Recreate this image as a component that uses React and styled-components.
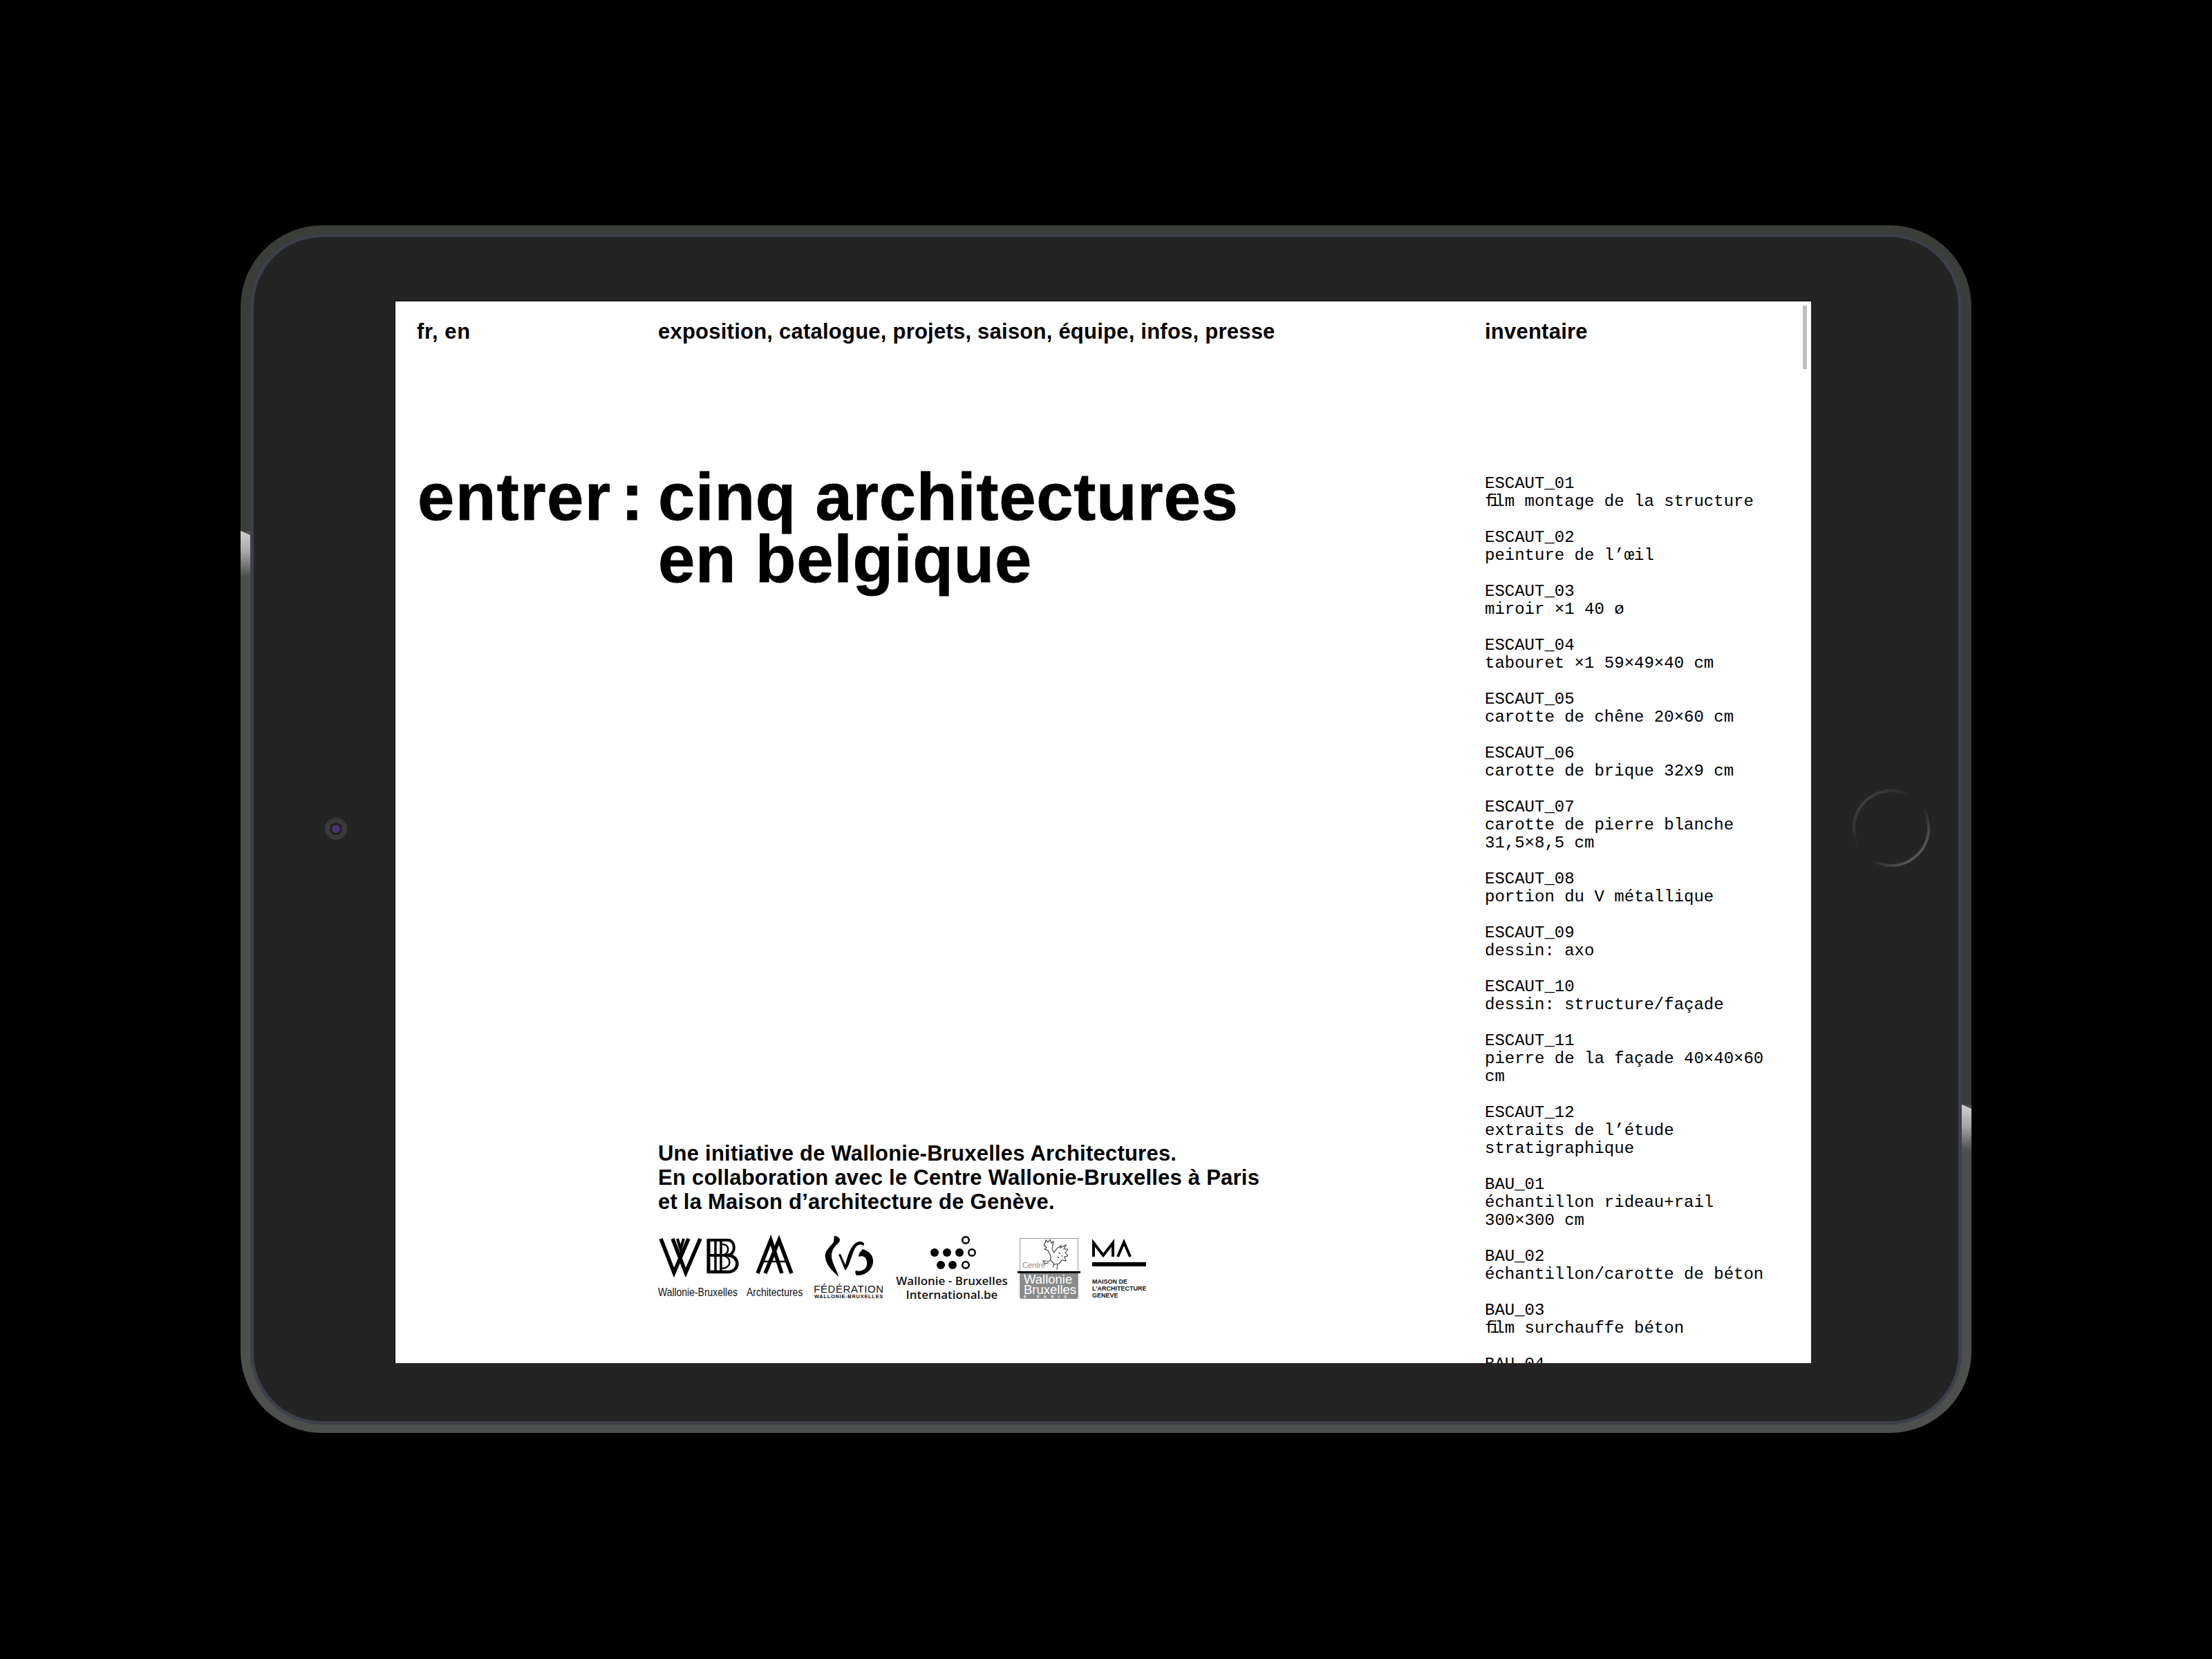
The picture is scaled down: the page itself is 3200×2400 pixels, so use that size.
import React from 'react';
import styled, { createGlobalStyle } from 'styled-components';

const GlobalStyle = createGlobalStyle`
  html, body {
    margin: 0;
    padding: 0;
    background: #000;
  }
`;

const Page = styled.div`
  width: 3200px;
  height: 2400px;
  padding: 326px 0 0 348px;
  box-sizing: border-box;
  background: #000;
  overflow: hidden;
`;

const Bezel = styled.div`
  position: relative;
  display: flex;
  width: 2504px;
  height: 1747px;
  padding: 13px 14px 12px;
  box-sizing: border-box;
  border-radius: 118px;
  background:
    linear-gradient(#3a3d38 442px, #4d4f4c 442px) left / 50% 100% no-repeat,
    linear-gradient(#3a3d38 1272px, #4d4f4c 1272px) right / 50% 100% no-repeat;
`;

const Glint = styled.div`
  position: absolute;
  top: ${p => p.$top}px;
  ${p => p.$side}: 0;
  width: 14px;
  height: 66px;
  background: linear-gradient(#d0d0d0 0%, #a8a8a8 45%, #4d4f4c 100%);
  clip-path: polygon(0 0, 100% 6px, 100% 100%, 0 100%);
`;

const Face = styled.div`
  position: relative;
  flex: 1;
  display: flex;
  padding: 92px 213px 84px 204px;
  box-sizing: border-box;
  border-radius: 104px;
  background: #242424;
  border-style: solid;
  border-color: #3d404b;
  border-width: 4px 5px 5px;
`;

const Camera = styled.div`
  position: absolute;
  left: 103px;
  top: 840px;
  width: 32px;
  height: 32px;
  border-radius: 50%;
  background: #3a3a3a;
  display: flex;
  align-items: center;
  justify-content: center;

  &::after {
    content: '';
    width: 12px;
    height: 12px;
    border-radius: 50%;
    background: #47356e;
    border: 3px solid #1f1e24;
  }
`;

const HomeRing = styled.svg`
  position: absolute;
  left: 2309px;
  top: 795px;
  width: 120px;
  height: 120px;
`;

const Screen = styled.div`
  position: relative;
  flex: 1;
  background: #fff;
  overflow: hidden;
  display: grid;
  grid-template-columns: 380px 1196px 1fr;
  grid-template-rows: 238px minmax(0, 1fr);
  border-top: 1px solid #000;
  border-left: 1px solid #000;
  color: #000;
  font-family: 'Liberation Sans', Arial, sans-serif;
  font-weight: 700;
`;

const Scrollbar = styled.div`
  position: absolute;
  top: 6px;
  right: 6px;
  width: 6px;
  height: 92px;
  background: #bfbfbf;
`;

const NavText = styled.div`
  font-size: 31px;
  line-height: 36px;
  padding: 26px 0 0 ${p => p.$pad || 0}px;
  letter-spacing: ${p => p.$ls || 0.23}px;
`;

const Title = styled.h1`
  margin: 0;
  font-size: 96px;
  line-height: 90px;
  font-weight: 700;
  letter-spacing: ${p => p.$ls || 0.7}px;
  word-spacing: ${p => p.$words || 0}px;
  padding-left: ${p => p.$pad || 0}px;
  -webkit-text-stroke: 0.8px #000;
`;

const Middle = styled.div`
  display: flex;
  flex-direction: column;
  min-height: 0;
`;

const Initiative = styled.p`
  margin: auto 0 0;
  font-size: 31px;
  line-height: 35px;
  letter-spacing: 0.23px;
`;

const LogoRow = styled.div`
  display: flex;
  align-items: flex-start;
  margin: 32px 0 92px;
  height: 92px;
  flex-shrink: 0;
  font-weight: 400;
`;

const Logo = styled.div`
  width: ${p => p.$w}px;
  margin-left: ${p => p.$gap || 0}px;
  margin-top: ${p => p.$top || 0}px;
  flex-shrink: 0;
  display: flex;
  flex-direction: column;
  align-items: ${p => (p.$center ? 'center' : 'flex-start')};
  position: relative;
`;

const MarkPair = styled.div`
  display: flex;
  gap: 22px;
  padding-left: 1px;
`;

const Mark = styled.svg`
  display: block;
  overflow: visible;
  flex-shrink: 0;
`;

const Caption = styled.div`
  font-size: ${p => p.$size}px;
  line-height: ${p => p.$lh || p.$size}px;
  font-family: ${p => p.$font || "'Liberation Sans', Arial, sans-serif"};
  font-weight: ${p => p.$weight || 400};
  letter-spacing: ${p => p.$ls || 0}px;
  margin-top: ${p => p.$mt || 0}px;
  white-space: nowrap;
  color: ${p => p.$color || '#111'};
`;

const CaptionRow = styled.div`
  display: flex;
  gap: 11px;
  margin-top: 19px;
`;

const Squeezed = styled(Caption)`
  transform: scaleX(0.82);
  transform-origin: left center;
  width: ${p => p.$w}px;
`;

const CentreBox = styled.div`
  width: 85px;
  height: 86px;
  box-sizing: border-box;
  border: 1px solid #9a9a9a;
  display: flex;
  flex-direction: column;
`;

const CentreTop = styled.div`
  height: 48px;
  flex-shrink: 0;
  padding: 33px 0 0 3px;
  box-sizing: border-box;
  position: relative;
`;

const Rooster = styled.svg`
  position: absolute;
  left: 32px;
  top: 1px;
  width: 37px;
  height: 44px;
`;

const CentreGrey = styled.div`
  flex: 1;
  background: #8b8b8b;
  padding-left: 5px;
`;

const CentreRule = styled.div`
  position: absolute;
  left: -3px;
  top: 48px;
  width: 91px;
  height: 3px;
  background: #000;
`;

const Inventory = styled.div`
  padding-top: 13px;
  font-family: 'Liberation Mono', 'Courier New', monospace;
  font-weight: 400;
  font-size: 24px;
  line-height: 26px;
  min-height: 0;
`;

const Item = styled.div`
  margin-bottom: 26px;
`;

const FiPair = styled.span`
  letter-spacing: -7.2px;
`;

const items = [
  ['ESCAUT_01', 'film montage de la structure'],
  ['ESCAUT_02', 'peinture de l’œil'],
  ['ESCAUT_03', 'miroir ×1 40 ø'],
  ['ESCAUT_04', 'tabouret ×1 59×49×40 cm'],
  ['ESCAUT_05', 'carotte de chêne 20×60 cm'],
  ['ESCAUT_06', 'carotte de brique 32x9 cm'],
  ['ESCAUT_07', 'carotte de pierre blanche', '31,5×8,5 cm'],
  ['ESCAUT_08', 'portion du V métallique'],
  ['ESCAUT_09', 'dessin: axo'],
  ['ESCAUT_10', 'dessin: structure/façade'],
  ['ESCAUT_11', 'pierre de la façade 40×40×60', 'cm'],
  ['ESCAUT_12', 'extraits de l’étude', 'stratigraphique'],
  ['BAU_01', 'échantillon rideau+rail', '300×300 cm'],
  ['BAU_02', 'échantillon/carotte de béton'],
  ['BAU_03', 'film surchauffe béton'],
  ['BAU_04'],
];

function renderLine(line) {
  // the source font sets "fi" as a ligature, one cell wide
  if (line.startsWith('fi')) {
    return (
      <>
        <FiPair>fi</FiPair>
        {line.slice(2)}
      </>
    );
  }
  return line;
}

function WbMark() {
  return (
    <Mark width="118" height="50" viewBox="0 0 118 50" fill="none" stroke="#000">
      <g strokeWidth="5.5">
        <path d="M3 0 L22 49 L43 0" />
        <path d="M20 0 L39 49 L60 0" />
        <path d="M27 0 L31.5 15 L36 0" strokeWidth="4" />
      </g>
      <path d="M72 0 V50" strokeWidth="5" />
      <path d="M82 2 V48 M90 2 V48" strokeWidth="3.5" />
      <path d="M70 2 H100 C112 2 112 24 99 24 H72" strokeWidth="4" />
      <path d="M99 24 C118 24 118 48 100 48 H70" strokeWidth="4.5" />
      <path d="M92 8 C103 8 103 22 92 24 C106 26 106 42 92 43" strokeWidth="2.5" />
    </Mark>
  );
}

function AaMark() {
  return (
    <Mark width="56" height="50" viewBox="0 0 56 50" fill="none" stroke="#000" strokeWidth="5.5">
      <path d="M3 50 L22 2 L38 50" />
      <path d="M14 50 L34 2 L52 50" />
      <path d="M8 33 H44" strokeWidth="2.5" />
    </Mark>
  );
}

function FwbMark() {
  return (
    <Mark width="72" height="60" viewBox="0 0 72 60" fill="#000">
      <path d="M15 0 C24 1 25 7 20 11 C13 17 9 25 12 35 C14 43 19 50 21 59 C14 52 4 44 2 32 C0 20 12 14 14 8 C15 5 14 3 15 0 Z" />
      <path d="M21 27 L24 26 L31 42 C34 30 38 14 48 9 C54 6 61 11 57 14 C51 10 46 14 43 22 C39 32 36 44 31 50 C28 44 25 35 21 27 Z" />
      <path d="M56 19 C66 22 72 29 71 38 C70 50 58 58 47 57 C45 54 45 52 46 50 C56 53 64 46 62 37 C61 30 56 28 50 30 C50 26 53 22 56 19 Z" />
    </Mark>
  );
}

function DotsMark() {
  return (
    <Mark width="76" height="48" viewBox="0 0 76 48" stroke="#000">
      <g fill="#000" stroke="none">
        <circle cx="13" cy="24" r="6" />
        <circle cx="31" cy="24" r="6" />
        <circle cx="49" cy="24" r="6" />
        <circle cx="22" cy="42" r="6" />
        <circle cx="39" cy="42" r="6" />
      </g>
      <g fill="none" strokeWidth="2.5">
        <circle cx="67" cy="24" r="4.8" />
        <circle cx="58" cy="42" r="4.8" />
        <circle cx="58" cy="6" r="4.8" />
      </g>
    </Mark>
  );
}

function MaMark() {
  return (
    <Mark width="78" height="37" viewBox="0 0 78 37" fill="none" stroke="#000">
      <path d="M2 23 V3 L16 21 L30 3 V23" strokeWidth="4" />
      <path d="M37 23 L46 2 L55 23" strokeWidth="4" />
      <path d="M0 34 H78" strokeWidth="6" />
    </Mark>
  );
}

const App = () => {
  return (
    <>
      <GlobalStyle />
      <Page>
        <Bezel>
          <Glint $side="left" $top={442} />
          <Glint $side="right" $top={1272} />
          <Face>
            <Camera />
            <HomeRing viewBox="0 0 120 120" fill="none">
              <defs>
                <linearGradient id="ring" x1="0" y1="0" x2="1" y2="1">
                  <stop offset="0" stopColor="#4a4a4a" />
                  <stop offset="0.42" stopColor="#242424" />
                  <stop offset="0.58" stopColor="#242424" />
                  <stop offset="1" stopColor="#707070" />
                </linearGradient>
              </defs>
              <circle cx="60" cy="60" r="54" stroke="url(#ring)" strokeWidth="4" />
            </HomeRing>
            <Screen>
              <Scrollbar />
              <NavText $pad={31} $ls={0.6}>fr, en</NavText>
              <NavText>exposition, catalogue, projets, saison, équipe, infos, presse</NavText>
              <NavText>inventaire</NavText>
              <Title $pad={32} $ls={1.4} $words={-14}>entrer :</Title>
              <Middle>
                <Title>
                  cinq architectures
                  <br />
                  en belgique
                </Title>
                <Initiative>
                  Une initiative de Wallonie-Bruxelles Architectures.
                  <br />
                  En collaboration avec le Centre Wallonie-Bruxelles à Paris
                  <br />
                  et la Maison d’architecture de Genève.
                </Initiative>
                <LogoRow>
                  <Logo $w={208} $top={4}>
                    <MarkPair>
                      <WbMark />
                      <AaMark />
                    </MarkPair>
                    <CaptionRow>
                      <Squeezed $size={17} $lh={17} $w={117}>Wallonie-Bruxelles</Squeezed>
                      <Squeezed $size={17} $lh={17} $w={80}>Architectures</Squeezed>
                    </CaptionRow>
                  </Logo>
                  <Logo $w={96} $gap={20} $center>
                    <FwbMark />
                    <Caption $size={15} $ls={0.6} $mt={9}>FÉDÉRATION</Caption>
                    <Caption $size={7.5} $ls={0.7} $weight={700}>WALLONIE-BRUXELLES</Caption>
                  </Logo>
                  <Logo $w={164} $gap={19} $center>
                    <DotsMark />
                    <Caption $size={17} $lh={20} $mt={7} $font="'Open Sans', sans-serif" $weight={600}>
                      Wallonie - Bruxelles
                    </Caption>
                    <Caption $size={17} $lh={20} $font="'Open Sans', sans-serif" $weight={600}>
                      International.be
                    </Caption>
                  </Logo>
                  <Logo $w={85} $gap={16} $top={3}>
                    <CentreBox>
                      <CentreTop>
                        <Caption $size={11} $color="#888">Centre</Caption>
                        <Rooster viewBox="0 0 37 44" fill="none" stroke="#444" strokeWidth="1.2">
                          <path d="M2 8 L4 5 L5 1 L8 4 L11 0 L13 5 L16 3 L15 9 L14 14 L17 19 L21 13 L27 9 L26 12 L34 8 L31 14 L37 14 L33 19 L37 24 L32 25 L34 31 L28 30 L24 35 L17 36 L12 30 L12 24 L8 16 L3 14 L6 12 Z" />
                          <path d="M17 36 L15 40 M22 35 L21 44 M12 30 L8 32 L1 31 L3 35 L9 34" />
                          <path d="M24 19 L26 21 M28 23 L29 25 M22 25 L24 27" />
                        </Rooster>
                      </CentreTop>
                      <CentreGrey>
                        <Caption $size={18.5} $lh={15} $color="#fff" $mt={3}>Wallonie</Caption>
                        <Caption $size={18.5} $lh={15} $color="#fff">Bruxelles</Caption>
                        <Caption $size={5} $lh={6} $ls={7} $color="#fff" $weight={700}>À PARIS</Caption>
                      </CentreGrey>
                    </CentreBox>
                    <CentreRule />
                  </Logo>
                  <Logo $w={80} $gap={20} $top={7}>
                    <MaMark />
                    <Caption $size={9} $lh={10} $weight={700} $mt={17}>
                      MAISON DE
                      <br />
                      L’ARCHITECTURE
                      <br />
                      GENEVE
                    </Caption>
                  </Logo>
                </LogoRow>
              </Middle>
              <Inventory>
                {items.map(item => (
                  <Item key={item[0]}>
                    {item.map(line => (
                      <div key={line}>{renderLine(line)}</div>
                    ))}
                  </Item>
                ))}
              </Inventory>
            </Screen>
          </Face>
        </Bezel>
      </Page>
    </>
  );
};

export default App;
